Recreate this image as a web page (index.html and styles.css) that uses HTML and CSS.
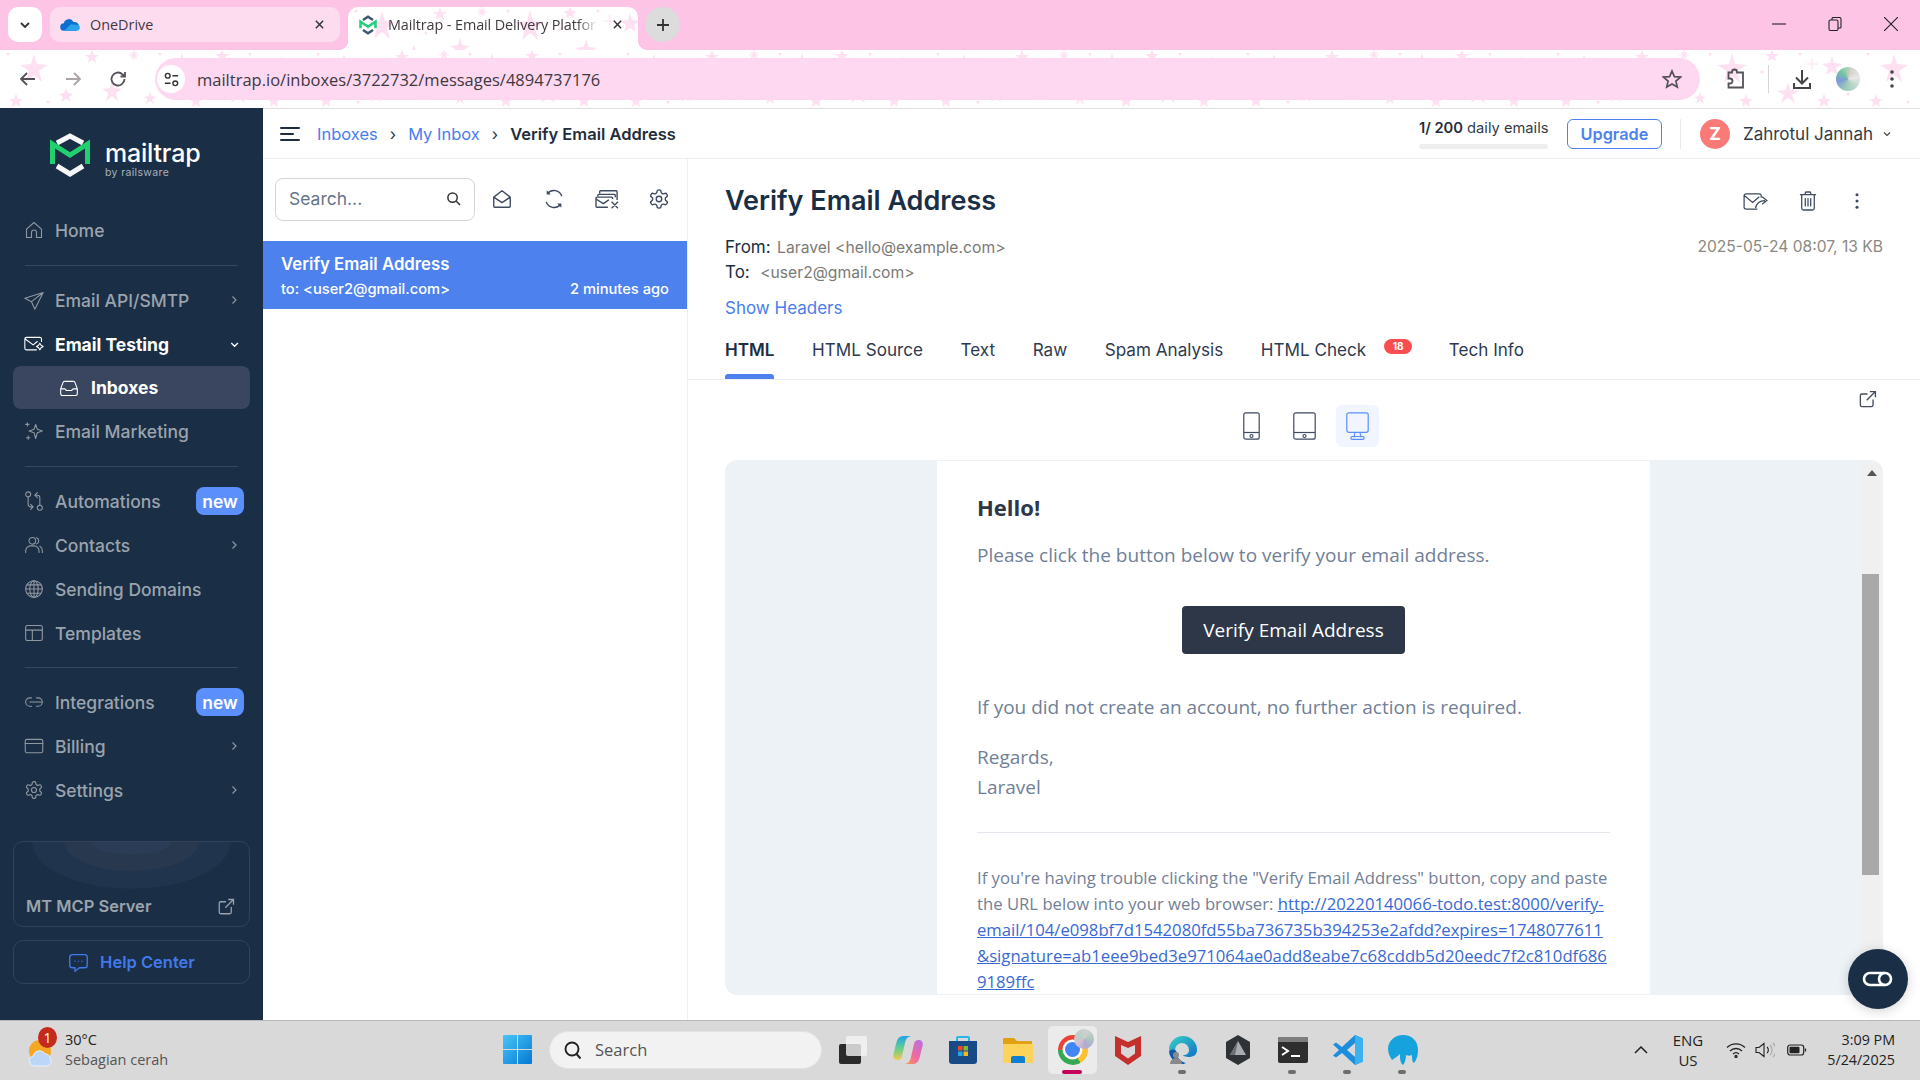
FILE: index.html
```html
<!DOCTYPE html>
<html lang="en">
<head>
<meta charset="utf-8">
<title>Mailtrap - Email Delivery Platform</title>
<link rel="stylesheet" href="styles.css">
</head>
<body>
<svg class="sprite" aria-hidden="true">
  <defs>
    <pattern id="stars" width="310" height="58" patternUnits="userSpaceOnUse">
      <g fill="#fde1f2">
        <polygon points="34,4 37,14 48,15 39,21 42,32 34,25 26,32 29,21 20,15 31,14"/>
        <polygon points="112,30 114,38 122,39 116,43 118,51 112,46 106,51 108,43 102,39 110,38"/>
        <polygon points="182,3 185,14 197,15 187,21 190,33 182,26 174,33 177,21 167,15 179,14"/>
        <polygon points="66,38 68,43 73,44 69,47 71,52 66,49 61,52 63,47 59,44 64,43"/>
        <polygon points="150,42 151.500,46 156,47 152.500,49 154,54 150,51 146,54 147.500,49 144,47 148.500,46"/>
        <polygon points="238,32 240.500,40 249,41 242,45 245,53 238,48 231,53 234,45 227,41 235.500,40"/>
        <polygon points="282,6 284,13 292,14 286,18 288,25 282,21 276,25 278,18 272,14 280,13"/>
        <polygon points="92,0 94,5 99,5 95,8 96,13 92,10 88,13 89,8 85,5 90,5"/>
        <polygon points="222,0 224,4 229,4 225,7 226,11 222,9 218,11 219,7 215,4 220,4"/>
        <polygon points="16,44 18,49 23,49 19,52 20,57 16,54 12,57 13,52 9,49 14,49"/>
        <polygon points="196,44 198,49 203,49 199,52 200,57 196,54 192,57 193,52 189,49 194,49"/>
        <polygon points="274,44 276,49 281,49 277,52 278,57 274,54 270,57 271,52 267,49 272,49"/>
        <path d="M134 0v10M129 5h10M131 2l6 6M137 2l-6 6M262 8v12M256 14h12" stroke="#fde1f2" stroke-width="1.200"/>
        <circle cx="78" cy="26" r="1.600"/><circle cx="48" cy="52" r="1.600"/><circle cx="212" cy="22" r="1.800"/><circle cx="298" cy="44" r="1.800"/><circle cx="8" cy="4" r="1.600"/><circle cx="160" cy="4" r="1.600"/><circle cx="250" cy="4" r="1.600"/>
      </g>
    </pattern>
    <symbol id="gear" viewBox="0 0 24 24"><path d="M12.22 2h-.44a2 2 0 0 0-2 2v.18a2 2 0 0 1-1 1.73l-.43.25a2 2 0 0 1-2 0l-.15-.08a2 2 0 0 0-2.73.73l-.22.38a2 2 0 0 0 .73 2.73l.15.1a2 2 0 0 1 1 1.72v.51a2 2 0 0 1-1 1.74l-.15.09a2 2 0 0 0-.73 2.73l.22.38a2 2 0 0 0 2.73.73l.15-.08a2 2 0 0 1 2 0l.43.25a2 2 0 0 1 1 1.73V20a2 2 0 0 0 2 2h.44a2 2 0 0 0 2-2v-.18a2 2 0 0 1 1-1.73l.43-.25a2 2 0 0 1 2 0l.15.08a2 2 0 0 0 2.73-.73l.22-.39a2 2 0 0 0-.73-2.73l-.15-.08a2 2 0 0 1-1-1.74v-.5a2 2 0 0 1 1-1.74l.15-.09a2 2 0 0 0 .73-2.73l-.22-.38a2 2 0 0 0-2.73-.73l-.15.08a2 2 0 0 1-2 0l-.43-.25a2 2 0 0 1-1-1.73V4a2 2 0 0 0-2-2z"/><circle cx="12" cy="12" r="3"/></symbol>
    <symbol id="chev" viewBox="0 0 12 12"><path d="M4.500 2.500l3.500 3.500-3.500 3.500"/></symbol>
    <symbol id="ext" viewBox="0 0 24 24"><path d="M12 5H5a2 2 0 0 0-2 2v12a2 2 0 0 0 2 2h12a2 2 0 0 0 2-2v-7"/><path d="M11 13L22 2M15 2h7v7"/></symbol>
  </defs>
</svg>

<header class="tabstrip">
  <button class="tab-menu"><svg class="ic12" viewBox="0 0 12 12"><path d="M2 4l4 4 4-4"/></svg></button>
  <div class="tab">
    <svg class="favicon" viewBox="0 0 24 18"><path d="M5 16a4.500 4.500 0 0 1-.4-9A6 6 0 0 1 16 5.500a4.500 4.500 0 0 1 3 10.500z" fill="#0a6fd0"/><path d="M5 16h15a3.800 3.800 0 0 0 2-7l-9-1z" fill="#2aa3ea"/></svg>
    <span class="tab-title">OneDrive</span>
    <svg class="tab-x" viewBox="0 0 12 12"><path d="M2 2l8 8M10 2l-8 8"/></svg>
  </div>
  <div class="tab tab-active">
    <svg class="tab-pattern" aria-hidden="true"><rect width="100%" height="100%" fill="url(#stars)"/></svg>
    <svg class="favicon" viewBox="0 0 24 24"><polyline points="6,6 12,2 18,6" fill="none" stroke="#3d5570" stroke-width="3"/><polyline points="3,16 3,8 12,14 21,8 21,16" fill="none" stroke="#1fd07e" stroke-width="3"/><polyline points="6,18 12,22 18,18" fill="none" stroke="#3d5570" stroke-width="3"/></svg>
    <span class="tab-title tab-fade">Mailtrap - Email Delivery Platfor</span>
    <svg class="tab-x" viewBox="0 0 12 12"><path d="M2 2l8 8M10 2l-8 8"/></svg>
  </div>
  <button class="tab-new"><svg class="ic14" viewBox="0 0 14 14"><path d="M7 1v12M1 7h12"/></svg></button>
  <div class="win-ctrls">
    <svg class="win-ic" viewBox="0 0 14 14"><path d="M0 7h14"/></svg>
    <svg class="win-ic" viewBox="0 0 14 14"><rect x="1" y="3" width="9" height="10.500" rx="1.500"/><path d="M4 3V1.800Q4 .5 5.500 .5H11.500Q13 .5 13 2V10Q13 11 12 11H10"/></svg>
    <svg class="win-ic" viewBox="0 0 14 14"><path d="M0 0l14 14M14 0L0 14"/></svg>
  </div>
</header>

<div class="toolbar">
  <svg class="tool-pattern" aria-hidden="true"><rect width="100%" height="100%" fill="url(#stars)"/></svg>
  <div class="nav-btns">
    <svg class="tool-ic" viewBox="0 0 20 20"><path d="M17 10H3M9 4l-6 6 6 6"/></svg>
    <svg class="tool-ic tool-dim" viewBox="0 0 20 20"><path d="M3 10h14M11 4l6 6-6 6"/></svg>
    <svg class="tool-ic" viewBox="0 0 20 20"><path d="M16.500 10a6.500 6.500 0 1 1-2-4.700L17 7.500M17 3v4.500h-4.500"/></svg>
  </div>
  <div class="omnibox">
    <span class="site-ic"><svg class="ic18" viewBox="0 0 18 18"><circle cx="5" cy="5" r="2.500"/><path d="M10 5h6M2 13h6"/><circle cx="13" cy="13" r="2.500"/></svg></span>
    <span class="url">mailtrap.io/inboxes/3722732/messages/4894737176</span>
    <svg class="star-ic" viewBox="0 0 20 20"><polygon points="10,2 12.400,7.600 18.500,8.100 13.900,12.100 15.300,18 10,14.900 4.700,18 6.100,12.100 1.500,8.100 7.600,7.600"/></svg>
  </div>
  <div class="tool-right">
    <svg class="tool-ic tool-ext" viewBox="0 0 22 22"><path d="M7 4.500V4a2.500 2.500 0 0 1 5 0v.5h6v15H3.500v-4H5a2.500 2.500 0 0 0 0-5H3.500v-6z"/></svg>
    <span class="tool-sep"></span>
    <svg class="tool-ic tool-dl" viewBox="0 0 22 22"><path d="M11 2v13M5 9.500l6 6 6-6M3 15v5h16v-5"/></svg>
    <span class="profile-pic"></span>
    <svg class="dots-v" viewBox="0 0 4 18"><circle cx="2" cy="2" r="1.800"/><circle cx="2" cy="9" r="1.800"/><circle cx="2" cy="16" r="1.800"/></svg>
  </div>
</div>

<div class="app">
  <aside class="sidebar">
    <div class="brand">
      <svg class="brand-mark" viewBox="0 0 40 44">
        <polyline points="7,10 20,3 33,10" fill="none" stroke="#f4f6f8" stroke-width="5"/>
        <polyline points="2.500,31 2.500,11 20,22 37.500,11 37.500,31" fill="none" stroke="#22cf6f" stroke-width="5"/>
        <polyline points="7,33 20,41 33,33" fill="none" stroke="#f4f6f8" stroke-width="5"/>
      </svg>
      <div class="brand-words">
        <span class="brand-name">mailtrap</span>
        <span class="brand-sub">by railsware</span>
      </div>
    </div>
    <nav class="nav">
      <a class="nav-item"><svg class="nav-ic" viewBox="0 0 24 24"><path d="M3 11l9-8 9 8v10h-6v-6a3 3 0 0 0-6 0v6H3z"/></svg><span>Home</span></a>
      <div class="nav-div"></div>
      <a class="nav-item"><svg class="nav-ic" viewBox="0 0 24 24"><path d="M23 3L1 10l8 4 4 9zM23 3L9 14"/></svg><span>Email API/SMTP</span><svg class="nav-chev"><use href="#chev"/></svg></a>
      <a class="nav-item nav-on"><svg class="nav-ic" viewBox="0 0 24 24"><path d="M15 19H3a2 2 0 0 1-2-2V6a2 2 0 0 1 2-2h16a2 2 0 0 1 2 2v3M1.500 6L11 13l5-4"/><path d="M19 11l1.500 2.500L23 15l-2.500 1.500L19 19l-1.500-2.500L15 15l2.500-1.500z"/></svg><span>Email Testing</span><svg class="nav-chev"><path d="M3 4.500l3 3 3-3" transform="scale(1.100)"/></svg></a>
      <a class="nav-sub"><svg class="nav-ic" viewBox="0 0 24 24"><path d="M2 13l3-8a2 2 0 0 1 2-1h10a2 2 0 0 1 2 1l3 8v6a2 2 0 0 1-2 2H4a2 2 0 0 1-2-2zM2 13h5l2 2h6l2-2h5"/></svg><span>Inboxes</span></a>
      <a class="nav-item"><svg class="nav-ic" viewBox="0 0 24 24"><path d="M14 4l2 6 6 2-6 2-2 7-2-7-6-2 6-2z"/><path d="M4 2v4M2 4h4M5 18v4M3 20h4"/></svg><span>Email Marketing</span></a>
      <div class="nav-div"></div>
      <a class="nav-item"><svg class="nav-ic" viewBox="0 0 24 24"><circle cx="5" cy="4" r="3"/><circle cx="19" cy="20" r="3"/><path d="M5 7v9a3 3 0 0 0 3 3h3M8 16l3 3-3 3M19 17V8a3 3 0 0 0-3-3h-3M16 8l-3-3 3-3"/></svg><span>Automations</span><span class="new-badge">new</span></a>
      <a class="nav-item"><svg class="nav-ic" viewBox="0 0 24 24"><circle cx="10" cy="7" r="4"/><path d="M2 21v-2a6 6 0 0 1 6-6h4a6 6 0 0 1 6 6v2M15 3.200a4 4 0 0 1 0 7.600M19 13.500a6 6 0 0 1 3 5v2.500"/></svg><span>Contacts</span><svg class="nav-chev"><use href="#chev"/></svg></a>
      <a class="nav-item"><svg class="nav-ic" viewBox="0 0 24 24"><circle cx="12" cy="12" r="10"/><ellipse cx="12" cy="12" rx="5" ry="10"/><path d="M12 2v20M2 12h20M3.500 7h17M3.500 17h17"/></svg><span>Sending Domains</span></a>
      <a class="nav-item"><svg class="nav-ic" viewBox="0 0 24 24"><rect x="2" y="3" width="20" height="18" rx="2"/><path d="M2 8.500h20M10 8.500V21"/></svg><span>Templates</span></a>
      <div class="nav-div nav-div-tight"></div>
      <a class="nav-item"><svg class="nav-ic" viewBox="0 0 24 24"><path d="M9 7H7a5 5 0 0 0 0 10h2M15 7h2a5 5 0 0 1 0 10h-2M7 12h15"/></svg><span>Integrations</span><span class="new-badge">new</span></a>
      <a class="nav-item"><svg class="nav-ic" viewBox="0 0 24 24"><rect x="1.500" y="4" width="21" height="16" rx="2"/><path d="M1.500 9h21"/></svg><span>Billing</span><svg class="nav-chev"><use href="#chev"/></svg></a>
      <a class="nav-item"><svg class="nav-ic nav-gear"><use href="#gear"/></svg><span>Settings</span><svg class="nav-chev"><use href="#chev"/></svg></a>
    </nav>
    <div class="mcp-card">
      <span>MT MCP Server</span>
      <svg class="mcp-ext"><use href="#ext"/></svg>
    </div>
    <a class="help-btn"><svg class="help-ic" viewBox="0 0 24 24"><path d="M5 3h14a3 3 0 0 1 3 3v9a3 3 0 0 1-3 3h-6l-5 4v-4H5a3 3 0 0 1-3-3V6a3 3 0 0 1 3-3z"/><path d="M8 10.500h.01M12 10.500h.01M16 10.500h.01"/></svg><span>Help Center</span></a>
  </aside>

  <main class="main">
    <div class="topbar">
      <svg class="burger" viewBox="0 0 20 16"><path d="M1 2h18M1 8h12M1 14h18"/></svg>
      <nav class="crumbs">
        <a>Inboxes</a><span class="crumb-sep">›</span><a>My Inbox</a><span class="crumb-sep">›</span><b>Verify Email Address</b>
      </nav>
      <div class="quota">
        <div class="quota-text"><b>1/ 200</b> daily emails</div>
        <div class="quota-bar"></div>
      </div>
      <button class="upgrade">Upgrade</button>
      <span class="top-sep"></span>
      <span class="avatar">Z</span>
      <span class="username">Zahrotul Jannah</span>
      <svg class="user-chev" viewBox="0 0 12 12"><path d="M3 4.500l3 3 3-3"/></svg>
    </div>

    <div class="panes">
      <section class="list-pane">
        <div class="list-tools">
          <div class="search"><span>Search...</span><svg class="search-ic" viewBox="0 0 16 16"><circle cx="7" cy="7" r="5"/><path d="M11 11l4 4"/></svg></div>
          <svg class="tool-24 tool-first" viewBox="0 0 24 24"><path d="M3 10l9-7 9 7v10a1 1 0 0 1-1 1H4a1 1 0 0 1-1-1zM3 10l9 6 9-6"/></svg>
          <svg class="tool-24" viewBox="0 0 24 24"><path d="M20.500 9A9 9 0 0 0 5 6M3.500 15A9 9 0 0 0 19 18"/><path d="M4 2.500v4.500h4.500M20 21.500V17h-4.500" class="filled"/></svg>
          <svg class="tool-24 tool-28" viewBox="0 0 28 24"><path d="M6 6V4a1 1 0 0 1 1-1h17a1 1 0 0 1 1 1v9M4 9V8a1 1 0 0 1 1-1h17a1 1 0 0 1 1 1v2M15 21H3a1 1 0 0 1-1-1V11a1 1 0 0 1 1-1h16a1 1 0 0 1 1 1v1M2 12l8 5 6-4M19 15l7 7M26 15l-7 7"/></svg>
          <svg class="tool-24 tool-last"><use href="#gear"/></svg>
        </div>
        <div class="msg-row">
          <div class="msg-title">Verify Email Address</div>
          <div class="msg-sub"><span>to: &lt;user2@gmail.com&gt;</span><span>2 minutes ago</span></div>
        </div>
      </section>

      <section class="detail">
        <div class="detail-head">
          <div class="title-row">
            <h1>Verify Email Address</h1>
            <div class="title-actions">
              <svg class="act-fwd" viewBox="0 0 26 20"><path d="M15 18H3a2 2 0 0 1-2-2V4a2 2 0 0 1 2-2h14a2 2 0 0 1 2 2v2M1.500 4L10 11l7-6"/><path d="M13 17c1-5 5-8 10-8M20 5l5 4-5 4" /></svg>
              <svg class="act-trash" viewBox="0 0 20 22"><path d="M1 4h18M7 4V2a1 1 0 0 1 1-1h4a1 1 0 0 1 1 1v2M3 4v15a2 2 0 0 0 2 2h10a2 2 0 0 0 2-2V4M7 8v9M10 8v9M13 8v9"/></svg>
              <svg class="act-dots" viewBox="0 0 4 18"><circle cx="2" cy="2" r="1.700"/><circle cx="2" cy="9" r="1.700"/><circle cx="2" cy="16" r="1.700"/></svg>
            </div>
          </div>
          <div class="meta">
            <div class="meta-lines">
              <div><span class="meta-key">From:</span> Laravel &lt;hello@example.com&gt;</div>
              <div><span class="meta-key to-key">To:</span> &lt;user2@gmail.com&gt;</div>
            </div>
            <div class="meta-date">2025-05-24 08:07, 13 KB</div>
          </div>
          <a class="show-headers">Show Headers</a>
        </div>
        <div class="tabs">
          <a class="dtab dtab-on">HTML</a>
          <a class="dtab">HTML Source</a>
          <a class="dtab">Text</a>
          <a class="dtab">Raw</a>
          <a class="dtab">Spam Analysis</a>
          <a class="dtab dtab-badged">HTML Check<span class="count">18</span></a>
          <a class="dtab">Tech Info</a>
        </div>
        <div class="preview">
          <svg class="open-ext"><use href="#ext"/></svg>
          <div class="devices">
            <span class="device"><svg viewBox="0 0 17 28"><rect x=".8" y=".8" width="15.400" height="26.400" rx="2"/><path d="M1 20.500h15"/><circle cx="8.500" cy="24" r="1.500"/></svg></span>
            <span class="device"><svg class="tablet" viewBox="0 0 23 28"><rect x=".8" y=".8" width="21.400" height="26.400" rx="2"/><path d="M1 20.500h21"/><circle cx="11.500" cy="24" r="1.500"/></svg></span>
            <span class="device device-on"><svg class="tablet" viewBox="0 0 23 28"><rect x=".8" y=".8" width="21.400" height="19.500" rx="2"/><path d="M9 20.500l-1 5M14 20.500l1 5"/><rect x="5" y="24.500" width="13" height="2.800" rx="1"/></svg></span>
          </div>
          <div class="frame">
            <div class="email-scroll">
              <article class="email">
                <h2>Hello!</h2>
                <p class="p1">Please click the button below to verify your email address.</p>
                <div class="cta-wrap"><a class="cta">Verify Email Address</a></div>
                <p class="p2">If you did not create an account, no further action is required.</p>
                <p class="p3">Regards,<br>Laravel</p>
                <hr>
                <p class="subcopy">If you're having trouble clicking the "Verify Email Address" button, copy and paste<br>the URL below into your web browser: <a>http://20220140066-todo.test:8000/verify-<br>email/104/e098bf7d1542080fd55ba736735b394253e2afdd?expires=1748077611<br>&amp;signature=ab1eee9bed3e971064ae0add8eabe7c68cddb5d20eedc7f2c810df686<br>9189ffc</a></p>
              </article>
            </div>
            <div class="scrollbar">
              <svg class="sb-up" viewBox="0 0 10 6"><path d="M5 0l5 6H0z"/></svg>
              <div class="sb-thumb"></div>
            </div>
          </div>
        </div>
      </section>
    </div>
    <button class="chat-fab"><svg viewBox="0 0 32 16"><path d="M23 2H8a6 6 0 0 0 0 12h15"/><circle cx="23" cy="8" r="6"/></svg></button>
  </main>
</div>

<footer class="taskbar">
  <div class="weather">
    <div class="wx-ic">
      <svg viewBox="0 0 28 30"><circle cx="13" cy="13" r="11" fill="#f5a623"/><path d="M7 28a5 5 0 0 1-1-9.800A6.500 6.500 0 0 1 18 16a4.500 4.500 0 0 1 5 4.500A4.500 4.500 0 0 1 20 28z" fill="#bcd6f7" stroke="#e8f1fc"/></svg>
      <span class="wx-badge">1</span>
    </div>
    <div class="wx-text"><div>30°C</div><div class="wx-sub">Sebagian cerah</div></div>
  </div>
  <svg class="win-logo" viewBox="0 0 29 29">
    <defs><linearGradient id="wg" x1="0" y1="0" x2="1" y2="1"><stop offset="0" stop-color="#47c6f7"/><stop offset="1" stop-color="#0578d4"/></linearGradient></defs>
    <path d="M0 1a1 1 0 0 1 1-1h13v14H0zM15 0h13a1 1 0 0 1 1 1v13H15zM0 15h14v14H1a1 1 0 0 1-1-1zM15 15h14v13a1 1 0 0 1-1 1H15z" fill="url(#wg)"/>
  </svg>
  <div class="tb-search">
    <svg viewBox="0 0 20 20"><circle cx="9" cy="9" r="6.500"/><path d="M13.500 14l4 4.500"/></svg>
    <span>Search</span>
  </div>
  <div class="tb-apps">
    <span class="tb-app"><svg viewBox="0 0 30 30"><rect x="1" y="9" width="22" height="20" rx="2" fill="#2b2b2b"/><rect x="8" y="1" width="21" height="20" rx="2" fill="#f4f4f4" fill-opacity=".8"/></svg></span>
    <span class="tb-app"><svg viewBox="0 0 30 30"><defs><linearGradient id="cpa" x1="0" y1="0" x2="0" y2="1"><stop offset="0" stop-color="#1fa3e8"/><stop offset=".55" stop-color="#6cd08a"/><stop offset="1" stop-color="#f2c94c"/></linearGradient><linearGradient id="cpb" x1="1" y1="0" x2="0" y2="1"><stop offset="0" stop-color="#b46ee8"/><stop offset=".55" stop-color="#f06aa0"/><stop offset="1" stop-color="#f79a4c"/></linearGradient></defs><path d="M10 1h8c-4 1-5 3-6 7l-3 13c-.5 3-2 4-5 4-3 0-4.500-3-3.500-6l3-12C4.500 3 7 1 10 1z" fill="url(#cpa)"/><path d="M20 29h-8c4-1 5-3 6-7l3-13c.5-3 2-4 5-4 3 0 4.500 3 3.500 6l-3 12c-1 4-3.500 6-6.500 6z" fill="url(#cpb)"/></svg></span>
    <span class="tb-app"><svg viewBox="0 0 30 30"><path d="M9 7V3a1 1 0 0 1 1-1h10a1 1 0 0 1 1 1v4" fill="none" stroke="#29b6e8" stroke-width="2"/><path d="M1 6h28v20a3 3 0 0 1-3 3H4a3 3 0 0 1-3-3z" fill="#184a85"/><rect x="10" y="11" width="4.500" height="4.500" fill="#ea4b25"/><rect x="15.500" y="11" width="4.500" height="4.500" fill="#7dbb2f"/><rect x="10" y="16.500" width="4.500" height="4.500" fill="#22a6e6"/><rect x="15.500" y="16.500" width="4.500" height="4.500" fill="#fab715"/></svg></span>
    <span class="tb-app"><svg viewBox="0 0 30 30"><path d="M0 4a1 1 0 0 1 1-1h10l3 3h15v4H0z" fill="#e0a211"/><path d="M0 9h30v18a1 1 0 0 1-1 1H1a1 1 0 0 1-1-1z" fill="#fdd35a"/><path d="M8 23a2 2 0 0 1 2-2h10a2 2 0 0 1 2 2v5H8z" fill="#0f7fd3"/></svg></span>
    <span class="tb-app tb-app-on"><span class="chrome-ic"><span class="chrome-core"></span></span><span class="chrome-face"></span></span>
    <span class="tb-app"><svg viewBox="0 0 30 30"><path d="M2 1l13 6 13-6v20l-13 9-13-9z" fill="#c4302b"/><path d="M8 10l7 3 7-3v8.500l-7 5-7-5z" fill="#d8d8d8"/></svg></span>
    <span class="tb-app tb-dot"><svg viewBox="0 0 30 30"><defs><linearGradient id="ed" x1="0" y1="0" x2="1" y2="1"><stop offset="0" stop-color="#38d2c4"/><stop offset="1" stop-color="#1072c8"/></linearGradient></defs><path d="M15 1a14 14 0 0 1 14 14c0 5-4 7-8 7-3 0-6-1-6-2 4 0 6-2 6-5a7 7 0 0 0-14 0c-2-1-6 0-6 0A14 14 0 0 1 15 1z" fill="url(#ed)"/><path d="M1 16c3-3 8-2 8 3 0 4 4 8 9 9-2 1-3 1-4 1A14 14 0 0 1 1 16z" fill="#0e5da8"/><circle cx="8" cy="20" r="3" fill="#8a8a8a"/><path d="M2 29a6 6 0 0 1 12 0z" fill="#8a8a8a"/></svg></span>
    <span class="tb-app"><svg viewBox="0 0 30 30"><path d="M15 0l12 7v16l-12 7-12-7V7z" fill="#2f3236"/><path d="M15 6l8 14H7z" fill="#a9adb2"/><path d="M15 6l-3 14H7z" fill="#6c7075"/></svg></span>
    <span class="tb-app tb-dot"><svg viewBox="0 0 30 26"><rect width="30" height="26" rx="2" fill="#2e2e2e"/><path d="M0 2a2 2 0 0 1 2-2h26a2 2 0 0 1 2 2v3H0z" fill="#7d7d7d"/><path d="M4 10l6 4-6 4" fill="none" stroke="#fff" stroke-width="2"/><path d="M13 19h9" stroke="#fff" stroke-width="2"/></svg></span>
    <span class="tb-app tb-dot"><svg viewBox="0 0 30 30"><path d="M22 0l8 3.500v23L22 30 9 18l-6 4.500L0 20.500 6 15 0 9.500 3 7.500 9 12z" fill="#1c8ede"/><path d="M22 0l8 3.500v23L22 30z" fill="#3bb1ee"/><path d="M22 8l-8 7 8 7z" fill="#d8d8d8"/></svg></span>
    <span class="tb-app tb-dot"><svg viewBox="0 0 30 30"><path d="M15 0c9 0 15 6 15 15 0 6-2 11-4 13-2-1-2-5-2-8-2 1-4 1-6 0 0 4-1 8-3 10-3-2-3-7-3-11-2 2-5 4-8 6-2-3-4-7-4-11C0 6 7 0 15 0z" fill="#16a2dd"/></svg></span>
  </div>
  <div class="tray">
    <svg class="tray-up" viewBox="0 0 14 8"><path d="M1 7l6-6 6 6"/></svg>
    <div class="tray-lang"><div>ENG</div><div>US</div></div>
    <svg class="tray-wifi" viewBox="0 0 20 16"><path d="M1 5.500a13 13 0 0 1 18 0M4 9a8.500 8.500 0 0 1 12 0M7 12a4 4 0 0 1 6 0"/><circle cx="10" cy="14.500" r="1"/></svg>
    <svg class="tray-vol" viewBox="0 0 20 16"><path d="M1 5.500h3l5-4v13l-5-4H1zM12 5a4 4 0 0 1 0 6"/><path class="faint" d="M15 3a7 7 0 0 1 0 10M18 1a10 10 0 0 1 0 14"/></svg>
    <svg class="tray-bat" viewBox="0 0 20 12"><rect x=".7" y="1" width="16" height="10" rx="2.500"/><rect x="2.500" y="2.800" width="10" height="6.400" rx="1" class="fill"/><path d="M18.500 4.500v3" /></svg>
    <div class="tray-clock"><div>3:09 PM</div><div>5/24/2025</div></div>
  </div>
</footer>
</body>
</html>
```
FILE: styles.css
```css
* { box-sizing: border-box; }
html, body { margin: 0; padding: 0; }
body {
  width: 1920px;
  height: 1080px;
  overflow: hidden;
  display: flex;
  flex-direction: column;
  font-family: "Inter", "Liberation Sans", sans-serif;
  background: #fff;
  color: #1a2e45;
}
svg { display: block; flex: none; }
button { font: inherit; border: 0; padding: 0; background: none; }
a { text-decoration: none; color: inherit; }
.sprite { position: absolute; width: 0; height: 0; }

/* Browser tab strip */
.tabstrip {
  height: 50px;
  flex: none;
  background: #fec4e5;
  display: flex;
  align-items: flex-start;
  padding: 7px 0 0 8px;
  font-family: "Open Sans", "Noto Sans", sans-serif;
  font-size: 14.400px;
  color: #3f3a3e;
}
.tab-menu {
  width: 34px; height: 35px;
  border-radius: 10px;
  background: #fff;
  display: flex; align-items: center; justify-content: center;
}
.ic12 { width: 12px; height: 12px; fill: none; stroke: #333; stroke-width: 1.800; }
.tab {
  position: relative;
  width: 290px; height: 35px;
  margin-left: 8px;
  border-radius: 10px;
  background: #fedcf0;
  display: flex; align-items: center;
  padding: 0 10px;
}
.tab-active {
  height: 43px;
  background: #fff;
  padding-bottom: 8px;
  border-radius: 10px 10px 0 0;
}
.tab-active::before, .tab-active::after {
  content: "";
  position: absolute;
  bottom: 0;
  width: 10px; height: 10px;
}
.tab-active::before { left: -10px; background: radial-gradient(circle at 0 0, #fec4e5 10px, #fff 10.500px); }
.tab-active::after { right: -10px; background: radial-gradient(circle at 100% 0, #fec4e5 10px, #fff 10.500px); }
.tab-pattern { position: absolute; inset: 0; width: 100%; height: 100%; border-radius: 10px 10px 0 0; }
.favicon { position: relative; width: 20px; height: 20px; margin-right: 10px; }
.tab-title { position: relative; flex: 1; white-space: nowrap; }
.tab-fade { -webkit-mask-image: linear-gradient(90deg, #000 90%, transparent); mask-image: linear-gradient(90deg, #000 90%, transparent); letter-spacing: -.1px; }
.tab-x { position: relative; width: 11px; height: 11px; margin: 0 5px 0 14px; fill: none; stroke: #333; stroke-width: 1.600; }
.tab-new {
  width: 35px; height: 35px;
  margin-left: 7px;
  border-radius: 50%;
  background: #dcdcdc;
  display: flex; align-items: center; justify-content: center;
}
.ic14 { width: 14px; height: 14px; fill: none; stroke: #333; stroke-width: 1.800; }
.win-ctrls {
  margin-left: auto;
  display: flex;
  align-items: center;
  gap: 42px;
  padding: 10px 22px 0 0;
}
.win-ic { width: 14px; height: 14px; fill: none; stroke: #222; stroke-width: 1.100; }

/* Browser toolbar */
.toolbar {
  position: relative;
  height: 58px;
  flex: none;
  background: #fff;
  display: flex;
  align-items: center;
}
.tool-pattern { position: absolute; inset: 0; width: 100%; height: 100%; }
.nav-btns {
  position: relative;
  display: flex;
  align-items: center;
  gap: 25px;
  padding-left: 18px;
  width: 155px;
}
.tool-ic { width: 20px; height: 20px; fill: none; stroke: #55505a; stroke-width: 1.800; }
.tool-dim { stroke: #aaa4a8; }
.omnibox {
  position: relative;
  width: 1545px;
  height: 42px;
  border-radius: 21px;
  background: #fed8f0;
  display: flex;
  align-items: center;
  padding: 0 18px 0 2px;
}
.site-ic {
  width: 28px; height: 28px;
  border-radius: 50%;
  background: #fff;
  display: flex; align-items: center; justify-content: center;
  margin-right: 12px;
}
.ic18 { width: 17px; height: 17px; fill: none; stroke: #333; stroke-width: 1.500; }
.url {
  flex: 1;
  font-family: "Open Sans", "Noto Sans", sans-serif;
  font-size: 16.500px;
  color: #3d3940;
}
.star-ic { width: 20px; height: 20px; fill: none; stroke: #55505a; stroke-width: 1.700; }
.tool-right {
  position: relative;
  display: flex;
  align-items: center;
  padding-left: 25px;
}
.tool-ext { width: 22px; height: 22px; }
.tool-sep { width: 1px; height: 28px; background: #d8d4d6; margin-left: 21px; }
.tool-dl { width: 22px; height: 22px; stroke: #444; margin-left: 22px; stroke-width: 2; }
.profile-pic {
  width: 24px; height: 24px;
  border-radius: 50%;
  margin-left: 23px;
  background: conic-gradient(from 20deg, #d6d0c8, #e8e8e8, #b8d8c8, #9ac8b8, #8098d8, #70c8a0, #d8d0c8);
}
.dots-v { width: 4px; height: 18px; fill: #444; margin-left: 30px; }

/* App shell */
.app {
  flex: 1;
  min-height: 0;
  display: flex;
}
.sidebar {
  width: 263px;
  flex: none;
  background: #1a2e45;
  display: flex;
  flex-direction: column;
}
.brand {
  height: 100px;
  flex: none;
  display: flex;
  align-items: flex-start;
  padding: 25px 0 0 50px;
}
.brand-mark { width: 40px; height: 44px; }
.brand-words { display: flex; flex-direction: column; margin-left: 15px; color: #fff; }
.brand-name { font-size: 25px; font-weight: 500; line-height: 28px; letter-spacing: -.2px; margin-top: 6px; }
.brand-sub { font-size: 10.500px; line-height: 11px; letter-spacing: .35px; color: #a9b2bc; }
.nav { display: flex; flex-direction: column; }
.nav-item {
  height: 44px;
  display: flex;
  align-items: center;
  padding: 0 23px 0 24px;
  font-size: 17.500px;
  font-weight: 500;
  color: #9ba3ad;
}
.nav-ic {
  width: 20px; height: 20px;
  margin-right: 11px;
  fill: none;
  stroke: #9097a1;
  stroke-width: 1.300;
  stroke-linecap: round;
  stroke-linejoin: round;
}
.nav-gear { stroke-width: 1.400; }
.nav-chev {
  width: 12px; height: 12px;
  margin-left: auto;
  fill: none;
  stroke: #9097a1;
  stroke-width: 1.200;
}
.nav-on { color: #fff; font-weight: 700; }
.nav-on .nav-ic { stroke: #fff; }
.nav-on .nav-chev { stroke: #fff; }
.nav-sub {
  height: 43px;
  margin: 0 13px;
  padding-left: 46px;
  border-radius: 8px;
  background: #3a4660;
  display: flex;
  align-items: center;
  color: #fff;
  font-size: 17.500px;
  font-weight: 700;
}
.nav-sub .nav-ic { stroke: #fff; margin-right: 12px; }
.nav-div { height: 26px; display: flex; align-items: center; margin: 0 25px; }
.nav-div::before { content: ""; flex: 1; height: 1px; background: #38465f; }
.nav-div-tight { height: 25px; }
.new-badge {
  margin: 0 -4px 0 auto;
  width: 48px; height: 28px;
  border-radius: 8px;
  background: #5b8ffb;
  color: #fff;
  font-size: 17.500px;
  font-weight: 600;
  display: flex; align-items: center; justify-content: center;
}
.mcp-card {
  height: 86px;
  margin: 29px 13px 0;
  padding: 0 14px 10px 12px;
  border: 1px solid #344259;
  border-radius: 10px;
  display: flex;
  align-items: flex-end;
  justify-content: space-between;
  color: #9ba3ad;
  font-size: 16.500px;
  font-weight: 600;
  background:
    radial-gradient(ellipse 40px 12px at 50% 0, #2b3c56 98%, transparent 100%),
    radial-gradient(ellipse 68px 29px at 50% 0, #27384f 98%, transparent 100%),
    radial-gradient(ellipse 100px 47px at 50% 0, #21344d 98%, transparent 100%);
}
.mcp-ext { width: 18px; height: 18px; fill: none; stroke: #9ba3ad; stroke-width: 1.700; }
.help-btn {
  height: 44px;
  margin: 13px 13px 0;
  border: 1px solid #344259;
  border-radius: 10px;
  display: flex;
  align-items: center;
  justify-content: center;
  gap: 11px;
  color: #4279ea;
  font-size: 16.500px;
  font-weight: 600;
}
.help-ic { width: 21px; height: 21px; fill: none; stroke: #4279ea; stroke-width: 1.500; stroke-linecap: round; stroke-linejoin: round; }

/* Main */
.main {
  position: relative;
  flex: 1;
  min-width: 0;
  display: flex;
  flex-direction: column;
}
.topbar {
  height: 51px;
  flex: none;
  border-top: 1px solid #dedede;
  border-bottom: 1px solid #eeeeee;
  display: flex;
  align-items: center;
  padding-left: 17px;
  font-size: 17px;
}
.burger { width: 20px; height: 16px; fill: none; stroke: #1f2d3d; stroke-width: 2; stroke-linecap: round; }
.crumbs { display: flex; align-items: center; margin-left: 17px; color: #4a7dec; font-size: 16.500px; }
.crumbs b { color: #1f2d3d; font-weight: 600; }
.crumb-sep { color: #2d3a4a; margin: 0 12px; }
.quota { margin-left: auto; width: 129px; }
.quota-text { font-size: 14.700px; line-height: 20px; color: #333b47; white-space: nowrap; }
.quota-text b { font-weight: 600; color: #1f2d3d; }
.quota-bar { height: 5px; margin-top: 6px; border-radius: 3px; background: #eeeeee; }
.upgrade {
  width: 95px; height: 30px;
  margin-left: 19px;
  border: 1px solid #4d82ee;
  border-radius: 6px;
  background: #fff;
  color: #4d82ee;
  font-size: 16.300px;
  font-weight: 600;
}
.top-sep { width: 1px; height: 30px; background: #eaeaea; margin-left: 18px; }
.avatar {
  width: 30px; height: 30px;
  margin-left: 19px;
  border-radius: 50%;
  background: #f97a76;
  color: #fff;
  font-weight: 700;
  font-size: 17.500px;
  display: flex; align-items: center; justify-content: center;
}
.username { margin-left: 13px; color: #333b47; white-space: nowrap; }
.user-chev { width: 12px; height: 12px; margin: 0 27px 0 8px; fill: none; stroke: #444; stroke-width: 1.200; }

.panes { flex: 1; min-height: 0; display: flex; }

/* List pane */
.list-pane {
  width: 425px;
  flex: none;
  border-right: 1px solid #eeeeee;
}
.list-tools {
  height: 82px;
  display: flex;
  align-items: flex-start;
  padding: 19px 0 0 12px;
}
.search {
  width: 200px; height: 43px;
  border: 1px solid #d3d3da;
  border-radius: 8px;
  display: flex;
  align-items: center;
  justify-content: space-between;
  padding: 0 13px 3px;
  color: #66758a;
  font-size: 17.500px;
}
.search-ic { width: 15px; height: 15px; fill: none; stroke: #333; stroke-width: 1.600; }
.tool-24 {
  width: 22px; height: 22px;
  margin: 10px 0 0 30px;
  fill: none;
  stroke: #3e4a60;
  stroke-width: 1.500;
  stroke-linejoin: round;
}
.tool-first { margin-left: 16px; }
.tool-28 { width: 26px; margin-left: 29px; }
.tool-last { margin-left: 28px; }
.filled { fill: #3e4a60; stroke: none; }
.msg-row {
  height: 68px;
  background: #4d82ee;
  color: #fff;
  padding: 12px 18px 0 18px;
}
.msg-title { font-size: 16.800px; font-weight: 600; line-height: 22px; }
.msg-sub {
  display: flex;
  justify-content: space-between;
  margin-top: 4px;
  font-size: 14.700px;
  font-weight: 500;
  line-height: 20px;
}

/* Detail pane */
.detail { flex: 1; min-width: 0; display: flex; flex-direction: column; }
.detail-head { padding: 24px 37px 0; }
.title-row { display: flex; align-items: center; height: 36px; }
h1 { margin: 0; font-size: 27px; font-weight: 600; color: #1a2e45; line-height: 36px; }
.title-actions { margin-left: auto; display: flex; align-items: center; padding-right: 24px; }
.act-fwd { width: 25px; height: 19px; fill: none; stroke: #3e4a60; stroke-width: 1.300; }
.act-trash { width: 18px; height: 20px; margin-left: 31px; fill: none; stroke: #3e4a60; stroke-width: 1.400; }
.act-dots { width: 4px; height: 16px; margin-left: 38px; fill: #3e4a60; }
.meta {
  display: flex;
  justify-content: space-between;
  margin-top: 16px;
  font-size: 15.700px;
  line-height: 24px;
  color: #7b7a76;
}
.meta-key { color: #1a2e45; font-size: 17px; margin-right: 2px; }
.to-key { margin-right: 6px; }
.meta-date { color: #8a8a82; font-size: 15.600px; }
.show-headers { display: block; margin-top: 11px; height: 25px; line-height: 25px; color: #4a7dec; font-size: 17px; }
.tabs {
  display: flex;
  gap: 37.600px;
  margin-top: 16px;
  padding: 0 37px;
  border-bottom: 1px solid #eeeeee;
  font-size: 17.100px;
  color: #2d3a4f;
}
.dtab { height: 42px; line-height: 25px; padding-bottom: 17px; position: relative; white-space: nowrap; }
.dtab-on { color: #1a2e45; font-weight: 600; }
.dtab-on::after {
  content: "";
  position: absolute;
  left: 0; right: 0; bottom: 0;
  height: 5px;
  border-radius: 3px 3px 0 0;
  background: #4d82ee;
}
.dtab-badged { padding-right: 46px; margin-right: -1px; }
.count {
  position: absolute;
  right: 0; top: 2px;
  width: 28px; height: 15px;
  border-radius: 8px;
  background: #f94d4f;
  color: #fff;
  font-size: 10px;
  font-weight: 700;
  line-height: 15px;
  text-align: center;
}

/* Preview */
.preview { position: relative; flex: 1; min-height: 0; padding: 25px 37px 25px; display: flex; flex-direction: column; }
.open-ext { position: absolute; top: 10px; right: 43px; width: 19px; height: 19px; fill: none; stroke: #444d5c; stroke-width: 1.700; }
.devices { display: flex; justify-content: center; gap: 10px; height: 42px; flex: none; }
.device { width: 43px; height: 42px; border-radius: 6px; display: flex; align-items: center; justify-content: center; }
.device svg { width: 17px; height: 28px; fill: none; stroke: #3e4a60; stroke-width: 1.200; }
.device svg.tablet { width: 23px; }
.device-on { background: #f0f5ff; }
.device-on svg.tablet { stroke: #5b8ffb; }
.frame {
  flex: 1;
  min-height: 0;
  margin-top: 13px;
  display: flex;
  background: #edf2f7;
  border: 1px solid #edf2f7;
  border-radius: 12px;
  overflow: hidden;
}
.email-scroll { flex: 1; min-width: 0; overflow: hidden; display: flex; justify-content: center; }
.email {
  width: 713px;
  height: 100%;
  overflow: hidden;
  background: #fff;
  padding: 31px 40px 0;
  font-family: "Open Sans", "Noto Sans", sans-serif;
  font-size: 19px;
  line-height: 30px;
  color: #718096;
}
.email h2 { margin: 0; font-size: 22px; font-weight: 700; color: #2d3748; line-height: 30px; }
.email p { margin: 0; white-space: nowrap; }
.email .p1 { margin-top: 18px; }
.cta-wrap { display: flex; justify-content: center; margin-top: 36px; }
.cta {
  width: 223px; height: 48px;
  border-radius: 4px;
  background: #2d3748;
  color: #fff;
  display: flex; align-items: center; justify-content: center;
}
.email .p2 { margin-top: 38px; }
.email .p3 { margin-top: 20px; }
.email hr { border: 0; border-top: 1px solid #e8e5ef; margin: 30px 0 0; }
.email .subcopy { margin-top: 32px; font-size: 16.700px; line-height: 26px; }
.subcopy a { color: #3869d4; text-decoration: underline; }
.scrollbar { position: relative; width: 21px; flex: none; background: #f0f0f0; padding-top: 113px; }
.sb-up { position: absolute; top: 9px; left: 6px; width: 10px; height: 6px; fill: #555; }
.sb-thumb { width: 17px; height: 301px; margin-left: 1px; background: #a9a9a9; }
.chat-fab {
  position: absolute;
  right: 12px;
  bottom: 11px;
  width: 60px; height: 60px;
  border-radius: 50%;
  background: #1a2e45;
  box-shadow: 0 2px 12px rgba(0,0,0,.18);
  display: flex; align-items: center; justify-content: center;
}
.chat-fab svg { width: 32px; height: 16px; fill: none; stroke: #fff; stroke-width: 2.600; }

/* Windows taskbar */
.taskbar {
  height: 60px;
  flex: none;
  background: #d9d9d9;
  border-top: 1px solid #b9b9b9;
  display: flex;
  align-items: center;
  padding: 0 0 2px 27px;
  font-family: "Open Sans", "Noto Sans", sans-serif;
  color: #222;
}
.weather { width: 476px; display: flex; align-items: center; font-size: 14.500px; line-height: 20px; }
.wx-ic { position: relative; width: 28px; height: 30px; margin-top: 6px; }
.wx-ic svg { width: 28px; height: 30px; }
.wx-badge {
  position: absolute;
  left: 11px; top: -11px;
  width: 19px; height: 21px;
  border-radius: 50%;
  background: #c42b1c;
  color: #fff;
  font-size: 14px;
  line-height: 21px;
  text-align: center;
}
.wx-text { margin-left: 10px; }
.wx-sub { color: #555; }
.win-logo { width: 29px; height: 29px; }
.tb-search {
  width: 273px; height: 38px;
  margin-left: 17px;
  border-radius: 19px;
  background: #f2f2f2;
  border: 1px solid #e2e2e2;
  display: flex;
  align-items: center;
  padding-left: 13px;
  font-size: 16.500px;
  color: #555;
}
.tb-search svg { width: 20px; height: 20px; margin-right: 12px; fill: none; stroke: #222; stroke-width: 1.900; }
.tb-apps { display: flex; align-items: center; margin-left: 3px; }
.tb-app {
  position: relative;
  width: 55px; height: 48px;
  display: flex; align-items: center; justify-content: center;
}
.tb-app svg { width: 30px; height: 30px; }
.tb-app-on { background: #ebebeb; border-radius: 5px; margin: 0 3px; width: 49px; }
.tb-app-on::after {
  content: "";
  position: absolute;
  left: 14px; bottom: 0;
  width: 20px; height: 4px;
  border-radius: 2px;
  background: #c8005a;
}
.tb-dot::after {
  content: "";
  position: absolute;
  left: 23px; bottom: 0;
  width: 8px; height: 4px;
  border-radius: 2px;
  background: #6e6e6e;
}
.chrome-ic {
  width: 30px; height: 30px;
  border-radius: 50%;
  background: conic-gradient(from 0deg, #ea4335 0 30deg, #fbc02d 30deg 150deg, #34a853 150deg 270deg, #ea4335 270deg);
  display: flex; align-items: center; justify-content: center;
}
.chrome-core { width: 15px; height: 15px; border-radius: 50%; background: #4285f4; box-shadow: 0 0 0 2.500px #fff; }
.chrome-face {
  position: absolute;
  top: 3px; right: 3px;
  width: 20px; height: 20px;
  border-radius: 50%;
  background: conic-gradient(from 20deg, #d0d0cc, #a8c8c0, #b0a8d0, #d8c0d0, #b8d0c8, #d0d0cc);
}
.tray { margin-left: auto; display: flex; align-items: center; padding-right: 25px; font-size: 15px; line-height: 20px; }
.tray-up { width: 14px; height: 8px; fill: none; stroke: #222; stroke-width: 1.500; }
.tray-lang { width: 40px; margin-left: 20px; text-align: center; }
.tray-wifi { width: 20px; height: 16px; margin-left: 18px; fill: none; stroke: #222; stroke-width: 1.300; }
.tray-vol { width: 20px; height: 16px; margin-left: 9px; fill: none; stroke: #222; stroke-width: 1.100; }
.faint { stroke: #a5a5a5; }
.tray-bat { width: 20px; height: 12px; margin-left: 12px; fill: none; stroke: #222; stroke-width: 1.200; }
.tray-bat .fill { fill: #222; stroke: none; }
.tray-clock { width: 88px; text-align: right; white-space: nowrap; font-size: 14.300px; }
```
